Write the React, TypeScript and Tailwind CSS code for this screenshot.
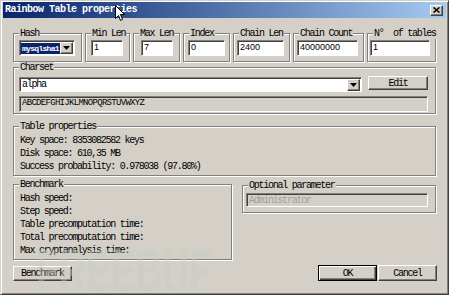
import type { ReactNode } from 'react'

const raised =
  'border border-t-white border-l-white border-r-[#404040] border-b-[#404040] shadow-[inset_-1px_-1px_0_#808080] bg-[#d4d0c8]'
const sunken =
  'border border-t-[#808080] border-l-[#808080] border-r-white border-b-white shadow-[inset_1px_1px_0_#404040]'

function Group({ label, className, children }: { label: string; className?: string; children: ReactNode }) {
  return (
    <div
      className={`relative border border-[#808080] shadow-[inset_1px_1px_0_#fff,1px_1px_0_#fff] ${className ?? ''}`}
    >
      <span className="absolute left-[5px] -top-[6px] bg-[#d4d0c8] px-[1px] leading-[11px] whitespace-pre">
        {label}
      </span>
      {children}
    </div>
  )
}

function DropArrow() {
  return (
    <div className={`${raised} w-[13px] h-[12px] shrink-0 flex items-center justify-center`}>
      <svg width="7" height="4" viewBox="0 0 7 4">
        <polygon points="0,0 7,0 3.5,4" fill="#000" />
      </svg>
    </div>
  )
}

function Field({ value, width }: { value: string; width: string }) {
  return (
    <div className={`${sunken} ${width} h-[16px] bg-white flex items-center pl-[2px] font-['Liberation_Sans',Arial,sans-serif] text-[9px] tracking-normal`}>
      {value}
    </div>
  )
}

export default function App() {
  return (
    <div className="relative w-[449px] h-[295px] overflow-hidden bg-[#d4d0c8] border border-t-[#d4d0c8] border-l-[#d4d0c8] border-r-[#404040] border-b-[#404040] shadow-[inset_1px_1px_0_#fff,inset_-1px_-1px_0_#808080] pt-[1px] px-[2px] font-['Liberation_Mono',monospace] text-[10px] tracking-[-1.25px] text-black">
      {/* title bar */}
      <div className="h-[16px] bg-linear-to-r from-[#0a246a] to-[#a6caf0] flex items-center justify-between">
        <span className="pl-[2px] text-white font-bold text-[10px] tracking-[-0.5px] leading-none">
          Rainbow Table properties
        </span>
        <div className={`${raised} w-[13px] h-[11px] mr-[3px] flex items-center justify-center`}>
          <svg width="7" height="6" viewBox="0 0 7 6">
            <path d="M0.5 0.5 L6.5 5.5 M6.5 0.5 L0.5 5.5" stroke="#000" strokeWidth="1.6" />
          </svg>
        </div>
      </div>

      <div className="px-[10px]">
        {/* parameters row */}
        <div className="mt-[15px] flex gap-[3px]">
          <Group label="Hash" className="w-[69px] pt-[6px] pb-[5px] pl-[5px]">
            <div className={`${sunken} w-[56px] h-[16px] bg-white flex items-center justify-between pl-[1px] pr-[1px]`}>
              <span className="bg-[#0a246a] text-white font-bold text-[8px] tracking-[-0.7px] leading-[11px] px-[1px]">
                mysqlsha1
              </span>
              <DropArrow />
            </div>
          </Group>
          <Group label="Min Len" className="w-[45px] pt-[6px] pb-[5px] pl-[5px]">
            <Field value="1" width="w-[32px]" />
          </Group>
          <Group label="Max Len" className="w-[47px] pt-[6px] pb-[5px] pl-[7px]">
            <Field value="7" width="w-[32px]" />
          </Group>
          <Group label="Index" className="w-[47px] pt-[6px] pb-[5px] pl-[4px]">
            <Field value="0" width="w-[37px]" />
          </Group>
          <Group label="Chain Len" className="w-[57px] pt-[6px] pb-[5px] pl-[3px]">
            <Field value="2400" width="w-[47px]" />
          </Group>
          <Group label="Chain Count" className="w-[71px] pt-[6px] pb-[5px] pl-[3px]">
            <Field value="40000000" width="w-[61px]" />
          </Group>
          <Group label="N°  of tables" className="w-[69px] pt-[6px] pb-[5px] pl-[2px]">
            <Field value="1" width="w-[60px]" />
          </Group>
        </div>

        {/* charset */}
        <Group label="Charset" className="mt-[5px] pt-[8px] pb-[1px] pl-[5px]">
          <div className="flex items-start gap-[6px]">
            <div className={`${sunken} mt-[1px] w-[343px] h-[15px] bg-white flex items-center justify-between pl-[2px] pr-[1px]`}>
              <span>alpha</span>
              <DropArrow />
            </div>
            <div className={`${raised} w-[60px] h-[14px] flex items-center justify-center`}>Edit</div>
          </div>
          <div className={`${sunken} mt-[4px] w-[409px] h-[16px] flex items-center pl-[2px] text-[9px] tracking-[-0.7px]`}>
            ABCDEFGHIJKLMNOPQRSTUVWXYZ
          </div>
        </Group>

        {/* table properties */}
        <Group label="Table properties" className="mt-[12px] pt-[7px] pb-[2px] pl-[6px] leading-[13px]">
          <div>Key space: 8353082582 keys</div>
          <div>Disk space: 610,35 MB</div>
          <div>Success probability: 0.978038 (97.80%)</div>
        </Group>

        {/* benchmark + optional */}
        <div className="mt-[8px] flex items-start gap-[10px]">
          <Group label="Benchmark" className="w-[219px] pt-[7px] pb-[2px] pl-[6px] leading-[13px]">
            <div>Hash speed:</div>
            <div>Step speed:</div>
            <div>Table precomputation time:</div>
            <div>Total precomputation time:</div>
            <div>Max cryptanalysis time:</div>
          </Group>
          <Group label="Optional parameter" className="mt-[1px] w-[194px] pt-[7px] pb-[5px] pl-[3px]">
            <div className={`${sunken} w-[182px] h-[14px] flex items-center pl-[2px] text-[#a0a0a0]`}>
              Administrator
            </div>
          </Group>
        </div>

        {/* buttons */}
        <div className="mt-[5px] flex items-start justify-between">
          <div className={`${raised} mt-[1px] w-[59px] h-[15px] flex items-center justify-center`}>Benchmark</div>
          <div className="flex gap-[1px] -mr-[1px]">
            <div className="w-[59px] h-[16px] border border-black bg-[#d4d0c8] shadow-[inset_1px_1px_0_#fff,inset_-1px_-1px_0_#404040,inset_-2px_-2px_0_#808080] flex items-center justify-center">
              OK
            </div>
            <div className={`${raised} w-[59px] h-[16px] flex items-center justify-center`}>Cancel</div>
          </div>
        </div>
      </div>

      {/* watermark */}
      <div className="pointer-events-none absolute left-[35px] top-[240px] origin-left scale-x-[0.62] font-['Liberation_Sans',Arial,sans-serif] font-bold text-[60px] leading-none tracking-normal text-[#c4cdc7] opacity-40">
        FREEBUF
      </div>

      {/* mouse cursor */}
      <svg className="pointer-events-none absolute left-[114px] top-[4px]" width="11" height="17" viewBox="0 0 11 17">
        <path d="M0.5 0.5 L0.5 13.5 L3.5 10.5 L5.5 15.5 L7.5 14.5 L5.5 9.5 L9.5 9.5 Z" fill="#fff" stroke="#000" strokeWidth="1" />
      </svg>
    </div>
  )
}
